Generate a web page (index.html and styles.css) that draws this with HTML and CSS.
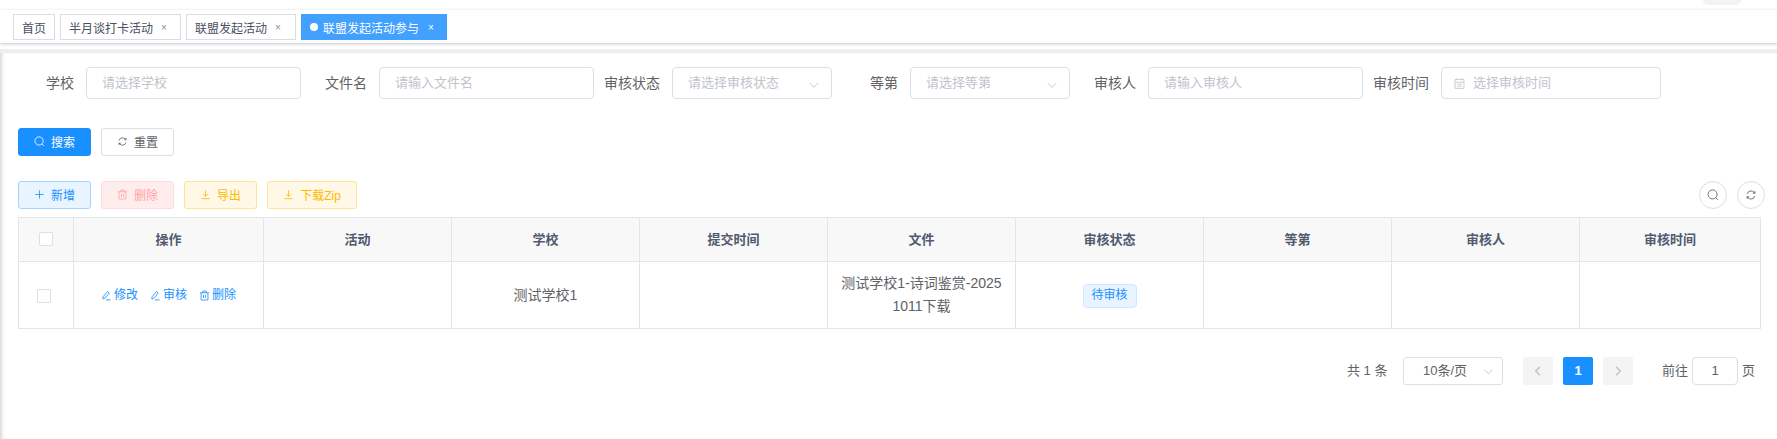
FILE: index.html
```html
<!DOCTYPE html>
<html lang="zh-CN">
<head>
<meta charset="utf-8">
<title>联盟发起活动参与</title>
<link rel="stylesheet" href="styles.css">
</head>
<body>
<svg class="sprite" aria-hidden="true">
  <symbol id="i-search" viewBox="0 0 16 16"><circle cx="7.4" cy="7.2" r="6"/><path d="M11.6 11.6 14.4 14.4"/></symbol>
  <symbol id="i-refresh" viewBox="0 0 16 16"><path d="M2.8 6.6A5.4 5.4 0 0 1 12.2 4.6L13.2 5.6M13.2 2.8v2.8h-2.8M13.2 9.4A5.4 5.4 0 0 1 3.8 11.4L2.8 10.4M2.8 13.2v-2.8h2.8"/></symbol>
  <symbol id="i-plus" viewBox="0 0 16 16"><path d="M8 2v12M2 8h12"/></symbol>
  <symbol id="i-trash" viewBox="0 0 16 16"><path d="M1.5 4h13M5.5 4V1.5h5V4M3 4v10.5h10V4M6.5 7v4.5M9.5 7v4.5"/></symbol>
  <symbol id="i-download" viewBox="0 0 16 16"><path d="M8 2v8.5M4.5 7.4 8 10.8l3.5-3.4M2 14h12"/></symbol>
  <symbol id="i-calendar" viewBox="0 0 16 16"><path d="M2.5 3h11v11h-11zM2.5 6.5h11M5 1.5V4M11 1.5V4M5 9h6M5 11.5h6"/></symbol>
  <symbol id="i-edit" viewBox="0 0 16 16"><path d="M9.6 2.2 12 4.4 5.6 12 2.6 13l.4-3.2zM7 14.4h7"/></symbol>
  <symbol id="i-down" viewBox="0 0 16 16"><path d="M2.5 5.5 8 11l5.5-5.5"/></symbol>
  <symbol id="i-left" viewBox="0 0 16 16"><path d="M10.5 2.5 5 8l5.5 5.5"/></symbol>
  <symbol id="i-right" viewBox="0 0 16 16"><path d="M5.5 2.5 11 8l-5.5 5.5"/></symbol>
</svg>

<header class="topbar"><span class="avatar-edge"></span></header>

<nav class="tags">
  <a class="tag tag-home">首页</a>
  <a class="tag tag-w1">半月谈打卡活动<i class="close">×</i></a>
  <a class="tag tag-w2">联盟发起活动<i class="close">×</i></a>
  <a class="tag tag-active"><i class="dot"></i>联盟发起活动参与<i class="close">×</i></a>
</nav>
<div class="strip"></div>

<main class="content">
  <form class="filters">
    <label class="lab lab-first">学校</label>
    <div class="ctl ctl-wide"><span class="ph">请选择学校</span></div>
    <label class="lab">文件名</label>
    <div class="ctl ctl-wide"><span class="ph">请输入文件名</span></div>
    <label class="lab">审核状态</label>
    <div class="ctl ctl-select"><span class="ph">请选择审核状态</span><svg class="ico chev"><use href="#i-down"/></svg></div>
    <label class="lab">等第</label>
    <div class="ctl ctl-select"><span class="ph">请选择等第</span><svg class="ico chev"><use href="#i-down"/></svg></div>
    <label class="lab">审核人</label>
    <div class="ctl ctl-wide"><span class="ph">请输入审核人</span></div>
    <label class="lab">审核时间</label>
    <div class="ctl ctl-date"><svg class="ico cal"><use href="#i-calendar"/></svg><span class="ph">选择审核时间</span></div>
  </form>

  <div class="actions">
    <button class="btn btn-primary" type="button"><svg class="ico"><use href="#i-search"/></svg>搜索</button>
    <button class="btn btn-plain" type="button"><svg class="ico"><use href="#i-refresh"/></svg>重置</button>
  </div>

  <div class="toolbar">
    <button class="btn btn-add" type="button"><svg class="ico"><use href="#i-plus"/></svg>新增</button>
    <button class="btn btn-del" type="button"><svg class="ico"><use href="#i-trash"/></svg>删除</button>
    <button class="btn btn-warn" type="button"><svg class="ico"><use href="#i-download"/></svg>导出</button>
    <button class="btn btn-warn btn-zip" type="button"><svg class="ico"><use href="#i-download"/></svg>下载Zip</button>
    <div class="round-group">
      <button class="round" type="button"><svg class="ico"><use href="#i-search"/></svg></button>
      <button class="round" type="button"><svg class="ico"><use href="#i-refresh"/></svg></button>
    </div>
  </div>

  <table class="grid">
    <colgroup>
      <col class="c-check"><col class="c-op"><col class="c-std"><col class="c-std"><col class="c-std"><col class="c-std"><col class="c-std"><col class="c-std"><col class="c-std"><col class="c-last">
    </colgroup>
    <thead>
      <tr>
        <th><span class="check"></span></th>
        <th>操作</th><th>活动</th><th>学校</th><th>提交时间</th><th>文件</th><th>审核状态</th><th>等第</th><th>审核人</th><th>审核时间</th>
      </tr>
    </thead>
    <tbody>
      <tr>
        <td class="td-check"><span class="check"></span></td>
        <td>
          <div class="ops">
            <a class="op"><svg class="ico"><use href="#i-edit"/></svg>修改</a>
            <a class="op"><svg class="ico"><use href="#i-edit"/></svg>审核</a>
            <a class="op"><svg class="ico"><use href="#i-trash"/></svg>删除</a>
          </div>
        </td>
        <td></td>
        <td>测试学校1</td>
        <td></td>
        <td class="td-file">测试学校1-诗词鉴赏-20251011下载</td>
        <td><span class="status">待审核</span></td>
        <td></td><td></td><td></td>
      </tr>
    </tbody>
  </table>

  <div class="pager">
    <span class="total">共 1 条</span>
    <div class="page-size">10条/页<svg class="ico chev"><use href="#i-down"/></svg></div>
    <span class="page-btn prev"><svg class="ico"><use href="#i-left"/></svg></span>
    <span class="page-btn current">1</span>
    <span class="page-btn next"><svg class="ico"><use href="#i-right"/></svg></span>
    <span class="goto">前往</span>
    <span class="page-input">1</span>
    <span class="goto-end">页</span>
  </div>
</main>
</body>
</html>
```

FILE: styles.css
```css
* { box-sizing: border-box; }
html, body { margin: 0; padding: 0; }
body {
  width: 1777px;
  height: 439px;
  overflow: hidden;
  background: #fff;
  color: #606266;
  font-family: "Liberation Sans", "Noto Sans CJK SC", sans-serif;
  font-size: 13px;
}
.sprite { display: none; }
.ico {
  width: 12px;
  height: 12px;
  fill: none;
  stroke: currentColor;
  stroke-width: 1.2;
  flex: none;
}

.topbar { height: 10px; position: relative; box-shadow: 0 1px 3px rgba(0, 21, 41, .06); }
.avatar-edge {
  position: absolute;
  left: 1703px;
  top: 0;
  width: 38px;
  height: 5px;
  background: #f3f3f4;
  border-radius: 0 0 10px 10px;
}

.tags {
  height: 33px;
  padding: 4px 0 0 13px;
  display: flex;
  align-items: flex-start;
  gap: 5px;
  background: #fff;
  box-shadow: 0 1px 3px rgba(60, 60, 100, .3);
  position: relative;
}
.tag {
  height: 26px;
  padding: 0 8px;
  display: flex;
  align-items: center;
  border: 1px solid #d8dce5;
  font-size: 12px;
  color: #495060;
  white-space: nowrap;
}
.tag-home { width: 42px; }
.tag-w1 { width: 121px; }
.tag-w2 { width: 110px; }
.tag-active {
  width: 146px;
  border-color: #42a0ff;
  background: #42a0ff;
  color: #fff;
}
.close { font-style: normal; font-size: 10px; color: #8a8f99; margin-left: 8px; }
.tag-active .close { color: #fff; margin-left: 9px; }
.dot { width: 8px; height: 8px; border-radius: 50%; background: #fff; margin-right: 5px; flex: none; }

.strip { height: 4px; margin-top: 6px; background: #eeeeef; }

.content {
  height: 386px;
  padding: 14px 0 0 18px;
  box-shadow: inset 4px 0 4px -3px #c8c9d0;
}

.filters { display: flex; align-items: center; height: 32px; }
.lab {
  width: 78px;
  text-align: right;
  padding: 0 12px 2px 0;
  font-size: 14px;
  color: #606266;
  flex: none;
  white-space: nowrap;
}
.lab-first { width: 68px; }
.ctl {
  height: 32px;
  flex: none;
  display: flex;
  align-items: center;
  padding: 0 11px 0 15px;
  border: 1px solid #dcdfe6;
  border-radius: 4px;
  background: #fff;
}
.ctl-wide { width: 215px; }
.ctl-select { width: 160px; }
.ctl-date { width: 220px; padding-left: 11px; }
.ph { font-size: 13px; color: #c0c4cc; white-space: nowrap; padding-bottom: 3px; }
.chev { width: 12px; height: 12px; color: #c0c4cc; margin-left: auto; margin-top: 3px; }
.cal { color: #c8ccd3; width: 13px; height: 13px; margin-right: 7px; }

.actions, .toolbar { display: flex; align-items: center; height: 28px; gap: 10px; }
.actions { margin-top: 29px; }
.toolbar { margin-top: 25px; padding-right: 12px; }
.btn {
  width: 73px;
  height: 28px;
  padding: 0 0 2px;
  display: flex;
  align-items: center;
  justify-content: center;
  gap: 6px;
  border-radius: 3px;
  border: 1px solid #dcdfe6;
  background: #fff;
  color: #606266;
  font: inherit;
  font-size: 12px;
}
.btn .ico { width: 11px; height: 11px; }
.btn-primary { background: #1890ff; border-color: #1890ff; color: #fff; }
.btn-add { background: #e8f4ff; border-color: #a3d3ff; color: #1890ff; }
.btn-del { background: #ffeded; border-color: #ffdbdb; color: #ffa4a4; }
.btn-warn { background: #fff8e6; border-color: #ffe399; color: #ffba00; }
.btn-zip { width: 90px; }

.round-group { margin-left: auto; display: flex; gap: 10px; }
.round {
  width: 28px;
  height: 28px;
  padding: 0;
  border-radius: 50%;
  border: 1px solid #dcdfe6;
  background: #fff;
  color: #606266;
  display: flex;
  align-items: center;
  justify-content: center;
}

.grid {
  margin-top: 8px;
  width: 1743px;
  table-layout: fixed;
  border-collapse: separate;
  border-spacing: 0;
  border-top: 1px solid #dfe6ec;
  border-left: 1px solid #dfe6ec;
  font-size: 14px;
}
.c-check { width: 55px; }
.c-op { width: 190px; }
.c-std { width: 188px; }
.c-last { width: 181px; }
.grid th, .grid td {
  border-right: 1px solid #dfe6ec;
  border-bottom: 1px solid #dfe6ec;
  text-align: center;
  padding: 0;
}
.grid th {
  height: 44px;
  padding-bottom: 2px;
  background: #f8f8f9;
  color: #515a6e;
  font-size: 13px;
  font-weight: 700;
}
.grid td { height: 67px; color: #606266; line-height: 23px; }
.check {
  display: inline-block;
  width: 14px;
  height: 14px;
  border: 1px solid #dcdfe6;
  border-radius: 2px;
  background: #fff;
  vertical-align: middle;
}
.td-check .check { margin-right: 4px; }
.grid .td-file { padding: 0 11px; word-break: break-all; }
.ops { display: flex; justify-content: center; align-items: center; gap: 12px; }
.op { display: flex; align-items: center; gap: 2px; color: #1890ff; font-size: 12px; }
.op .ico { width: 11px; height: 11px; }
.status {
  display: inline-block;
  width: 54px;
  height: 24px;
  line-height: 20px;
  background: #e8f4ff;
  border: 1px solid #d1e9ff;
  border-radius: 4px;
  color: #1890ff;
  font-size: 12px;
}

.pager {
  margin-top: 28px;
  height: 28px;
  display: flex;
  align-items: center;
  font-size: 13px;
  padding-left: 1329px;
}
.total { width: 56px; white-space: nowrap; padding-bottom: 3px; }
.page-size {
  width: 100px;
  height: 28px;
  border: 1px solid #dcdfe6;
  border-radius: 3px;
  display: flex;
  align-items: center;
  padding: 0 8px 3px 19px;
}
.page-size .chev { margin-top: 3px; width: 11px; height: 11px; }
.page-btn {
  width: 30px;
  height: 28px;
  margin-left: 10px;
  border-radius: 2px;
  background: #f4f4f5;
  color: #c0c4cc;
  display: flex;
  align-items: center;
  justify-content: center;
}
.page-btn .ico { stroke-width: 2; }
.prev { margin-left: 20px; }
.current { background: #1890ff; color: #fff; font-weight: 700; font-size: 13px; padding-bottom: 2px; }
.goto { margin-left: 29px; padding-bottom: 3px; }
.page-input {
  width: 46px;
  height: 28px;
  margin-left: 4px;
  border: 1px solid #dcdfe6;
  border-radius: 4px;
  text-align: center;
  line-height: 26px;
}
.goto-end { margin-left: 4px; padding-bottom: 3px; }
```
